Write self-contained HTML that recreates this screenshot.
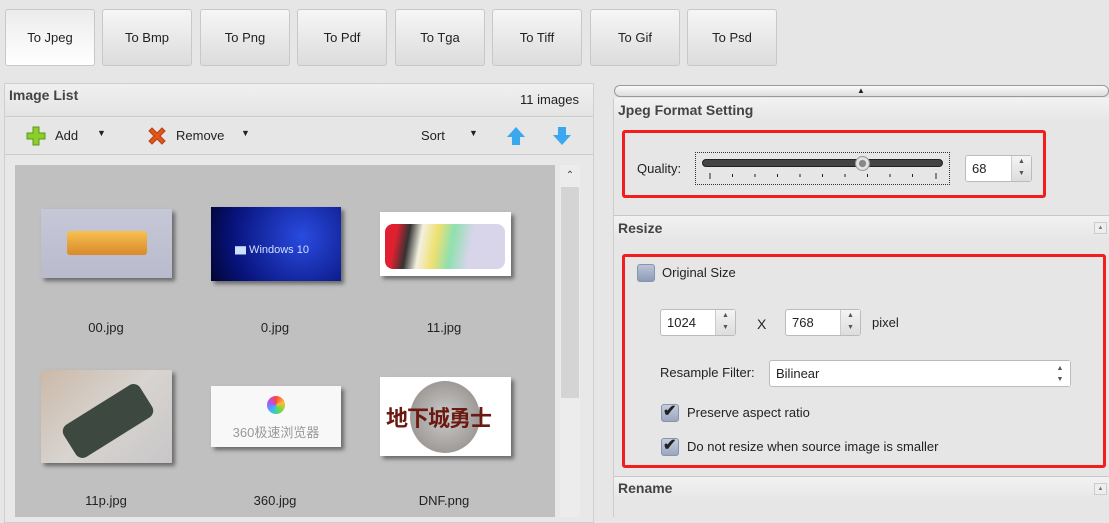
<!DOCTYPE html>
<html><head><meta charset="utf-8"><style>
*{box-sizing:border-box;margin:0;padding:0}
body{width:1109px;height:517px;overflow:hidden;background:#e6e6e6;font-family:"Liberation Sans","Noto Sans CJK SC",sans-serif;font-size:13px;color:#222;position:relative}
.a{position:absolute}
.btn{position:absolute;top:9px;width:90px;height:57px;border:1px solid #c8c8c8;border-radius:3px;background:linear-gradient(#f6f6f6,#dcdcdc);text-align:center;line-height:55px;font-size:13px}
.btn.on{background:linear-gradient(#ececec,#fff)}
.hdr{font-weight:bold;color:#444;font-size:14px}
.spin{position:absolute;background:#fff;border:1px solid #bbb;border-radius:3px;height:27px;padding-left:6px;line-height:25px}
.spin .s{position:absolute;right:0;top:0;width:20px;height:25px;background:linear-gradient(#f4f4f4,#ddd);border-left:1px solid #ccc;font-size:7px;color:#555;text-align:center;line-height:12px}
.cb{position:absolute;width:18px;height:18px;border:1px solid #8795aa;border-radius:3px;background:linear-gradient(#b9c4d8,#8e9bb6)}
.thumb{position:absolute;box-shadow:3px 3px 4px rgba(0,0,0,.45);overflow:hidden}
.lbl{position:absolute;width:130px;text-align:center;font-size:13px;color:#222}
.red{position:absolute;border:3px solid #f21d1d;border-radius:3px}
</style></head><body>
<div class="btn on" style="left:5px">To Jpeg</div>
<div class="btn" style="left:102px">To Bmp</div>
<div class="btn" style="left:200px">To Png</div>
<div class="btn" style="left:297px">To Pdf</div>
<div class="btn" style="left:395px">To Tga</div>
<div class="btn" style="left:492px">To Tiff</div>
<div class="btn" style="left:590px">To Gif</div>
<div class="btn" style="left:687px">To Psd</div>

<!-- left panel -->
<div class="a" style="left:4px;top:83px;width:590px;height:440px;border:1px solid #cfcfcf;background:#e8e8e8"></div>
<div class="a" style="left:5px;top:84px;width:588px;height:33px;background:linear-gradient(#f0f0f0,#e4e4e4);border-bottom:1px solid #ccc"></div>
<div class="a hdr" style="left:9px;top:87px">Image List</div>
<div class="a" style="left:520px;top:92px;font-size:13px">11 images</div>
<div class="a" style="left:5px;top:118px;width:588px;height:37px;background:#e6e6e6;border-bottom:1px solid #ccc"></div>
<svg class="a" style="left:26px;top:126px" width="20" height="20"><path d="M7 1h6v6h6v6h-6v6H7v-6H1V7h6z" fill="#8ccf2a" stroke="#5a9a18"/></svg>
<div class="a" style="left:55px;top:128px">Add</div>
<div class="a" style="left:97px;top:128px;font-size:9px">▼</div>
<svg class="a" style="left:146px;top:125px" width="22" height="22"><path d="M3 6l3-3 5 5 5-5 3 3-5 5 5 5-3 3-5-5-5 5-3-3 5-5z" fill="#e0561c" stroke="#b63e0e"/></svg>
<div class="a" style="left:176px;top:128px">Remove</div>
<div class="a" style="left:241px;top:128px;font-size:9px">▼</div>
<div class="a" style="left:421px;top:128px">Sort</div>
<div class="a" style="left:469px;top:128px;font-size:9px">▼</div>
<svg class="a" style="left:505px;top:125px" width="22" height="22"><path d="M11 2l9 10h-5v8H7v-8H2z" fill="#3aa8ee"/></svg>
<svg class="a" style="left:551px;top:125px" width="22" height="22"><path d="M11 20l9-10h-5V2H7v8H2z" fill="#3aa8ee"/></svg>
<div class="a" style="left:15px;top:165px;width:540px;height:352px;background:#c0c0c0"></div>
<div class="a" style="left:560px;top:165px;width:20px;height:352px;background:#ececec"></div>
<div class="a" style="left:560px;top:166px;width:20px;height:20px;text-align:center;font-size:10px;color:#444;line-height:20px">⌃</div>
<div class="a" style="left:561px;top:187px;width:18px;height:211px;background:#d4d4d4"></div>

<div class="thumb" style="left:41px;top:209px;width:131px;height:69px;background:linear-gradient(#c6c8d8,#b9bbcc)"><div style="margin:22px auto;width:80px;height:24px;background:linear-gradient(#f6c050,#d98a2a);border-radius:3px"></div></div>
<div class="thumb" style="left:211px;top:207px;width:130px;height:74px;background:radial-gradient(circle at 70% 40%,#2a4be0,#07127a 70%,#020530)"><div style="position:absolute;left:24px;top:34px;color:#cfe0ff;font-size:11px">▆ Windows 10</div></div>
<div class="thumb" style="left:380px;top:212px;width:131px;height:64px;background:#fff"><div style="position:absolute;left:5px;top:12px;width:120px;height:45px;background:linear-gradient(100deg,#e02030 10%,#333 20%,#f2f0e0 30%,#f0e070 42%,#8fe0b0 55%,#d8d4ea 70%);border-radius:8px"></div></div>
<div class="lbl" style="left:41px;top:320px">00.jpg</div>
<div class="lbl" style="left:210px;top:320px">0.jpg</div>
<div class="lbl" style="left:379px;top:320px">11.jpg</div>

<div class="thumb" style="left:41px;top:370px;width:131px;height:93px;background:linear-gradient(135deg,#cbb9a8,#d8d4d0 50%,#c8c6c8)"><div style="position:absolute;left:22px;top:32px;width:90px;height:38px;background:#3c4840;border-radius:8px;transform:rotate(-32deg)"></div></div>
<div class="thumb" style="left:211px;top:386px;width:130px;height:61px;background:#f8f8f8"><div style="position:absolute;left:56px;top:10px;width:18px;height:18px;border-radius:50%;background:conic-gradient(#f44,#fb3,#6d4,#3bf,#a5f,#f44)"></div><div style="position:absolute;left:0;width:130px;top:36px;text-align:center;color:#999;font-size:13px">360极速浏览器</div></div>
<div class="thumb" style="left:380px;top:377px;width:131px;height:79px;background:#fff"><div style="position:absolute;left:30px;top:4px;width:70px;height:72px;border-radius:50%;background:radial-gradient(#ccc,#8a8580)"></div><div style="position:absolute;left:6px;top:24px;color:#6a1a10;font-size:22px;font-weight:bold;letter-spacing:-1px">地下城勇士</div></div>
<div class="lbl" style="left:41px;top:493px">11p.jpg</div>
<div class="lbl" style="left:210px;top:493px">360.jpg</div>
<div class="lbl" style="left:379px;top:493px">DNF.png</div>

<!-- right panel -->
<div class="a" style="left:614px;top:85px;width:495px;height:12px;border:1px solid #999;border-radius:6px;background:linear-gradient(#fafafa,#ddd)"></div>
<div class="a" style="left:857px;top:86px;font-size:8px">▲</div>
<div class="a" style="left:613px;top:98px;width:496px;height:419px;border-left:1px solid #ccc;background:#e6e6e6"></div>
<div class="a" style="left:614px;top:98px;width:495px;height:24px;background:linear-gradient(#f2f2f2,#e6e6e6)"></div>
<div class="a hdr" style="left:618px;top:102px">Jpeg Format Setting</div>
<div class="red" style="left:622px;top:130px;width:424px;height:68px"></div>
<div class="a" style="left:637px;top:161px">Quality:</div>
<div class="a" style="left:695px;top:152px;width:255px;height:33px;border:1px dotted #333"></div>
<div class="a" style="left:702px;top:159px;width:241px;height:8px;background:#444;border-radius:4px;border:1px solid #222"></div>
<div class="a" style="left:855px;top:156px;width:15px;height:15px;border-radius:50%;background:radial-gradient(#888 35%,#eee 45%,#bbb);border:1px solid #999"></div>
<svg class="a" style="left:705px;top:172px" width="240" height="8"><g stroke="#222"><path d="M5 1v6M27.5 2v3M50 2v3M72.5 2v3M95 2v3M117.5 2v3M140 2v3M162.5 2v3M185 2v3M207.5 2v3M231 1v6"/></g></svg>
<div class="spin" style="left:965px;top:155px;width:67px">68<div class="s">▲<br>▼</div></div>
<div class="a" style="left:614px;top:215px;width:495px;height:1px;background:#c8c8c8"></div>
<div class="a" style="left:614px;top:216px;width:495px;height:24px;background:linear-gradient(#f2f2f2,#e6e6e6)"></div>
<div class="a hdr" style="left:618px;top:220px">Resize</div>
<div class="a" style="left:1094px;top:222px;width:13px;height:12px;border:1px solid #ccc;background:#eee;font-size:6px;text-align:center;line-height:10px;color:#777">▲</div>
<div class="red" style="left:622px;top:254px;width:484px;height:214px"></div>
<div class="cb" style="left:637px;top:264px"></div>
<div class="a" style="left:662px;top:265px">Original Size</div>
<div class="spin" style="left:660px;top:309px;width:76px">1024<div class="s">▲<br>▼</div></div>
<div class="a" style="left:757px;top:316px;font-size:14px">X</div>
<div class="spin" style="left:785px;top:309px;width:76px">768<div class="s">▲<br>▼</div></div>
<div class="a" style="left:872px;top:315px">pixel</div>
<div class="a" style="left:660px;top:365px">Resample Filter:</div>
<div class="spin" style="left:769px;top:360px;width:302px;height:27px">Bilinear<div class="s" style="background:#fff;border:none;line-height:11px;padding-top:2px">▲<br>▼</div></div>
<div class="cb" style="left:661px;top:404px;background:linear-gradient(#c5cedf,#9aa6be)"></div>
<div class="a" style="left:663px;top:401px;font-size:16px;font-weight:bold">✔</div>
<div class="a" style="left:687px;top:405px">Preserve aspect ratio</div>
<div class="cb" style="left:661px;top:438px;background:linear-gradient(#c5cedf,#9aa6be)"></div>
<div class="a" style="left:663px;top:435px;font-size:16px;font-weight:bold">✔</div>
<div class="a" style="left:687px;top:439px">Do not resize when source image is smaller</div>
<div class="a" style="left:614px;top:476px;width:495px;height:1px;background:#c8c8c8"></div>
<div class="a" style="left:614px;top:477px;width:495px;height:24px;background:linear-gradient(#f2f2f2,#e6e6e6)"></div>
<div class="a hdr" style="left:618px;top:480px">Rename</div>
<div class="a" style="left:1094px;top:483px;width:13px;height:12px;border:1px solid #ccc;background:#eee;font-size:6px;text-align:center;line-height:10px;color:#777">▲</div>
</body></html>
